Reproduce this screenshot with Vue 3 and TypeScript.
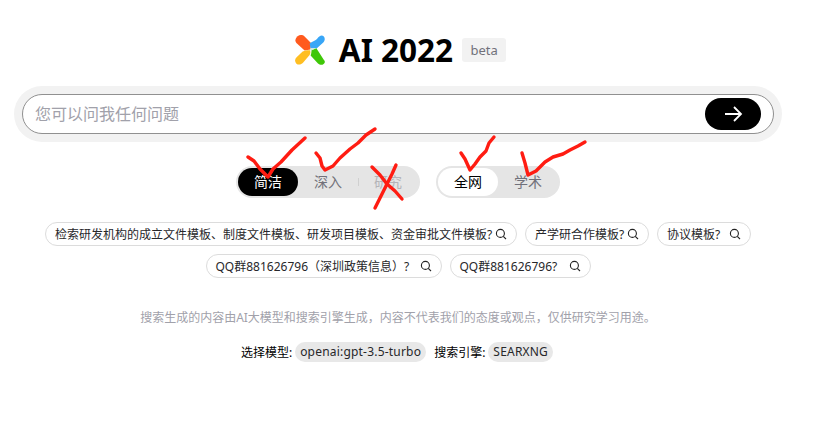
<script setup lang="ts">
import { ref } from 'vue'

const question = ref('')

const modes = [
  { label: '简洁', active: true },
  { label: '深入', active: false },
  { label: '研究', active: false, disabled: true },
]
const scopes = [
  { label: '全网', active: true },
  { label: '学术', active: false },
]
const rows = [
  [
    { text: '检索研发机构的成立文件模板、制度文件模板、研发项目模板、资金审批文件模板?', w: 472 },
    { text: '产学研合作模板?', w: 124 },
    { text: '协议模板?', w: 94 },
  ],
  [
    { text: 'QQ群881626796（深圳政策信息）?', w: 236 },
    { text: 'QQ群881626796?', w: 141 },
  ],
]
// 截图上手写的红色标记
const marks = [
  'M248 157 L254 161 L260 169 L268 177 L273 169 L281 162 L292 150 L305 138',
  'M316 153 L320 158 L322 166 L325 170 L333 166 L340 158 L350 149 L358 143 L366 135 L375 129',
  'M372 167 L380 175 L387 184 L395 191 L402 199',
  'M396 165 L392 174 L387 184 L381 196 L375 208',
  'M461 153 L465 159 L470 170 L475 164 L480 157 L486 151 L489 143 L494 137',
  'M522 153 L525 163 L528 175 L536 171 L545 162 L553 157 L563 154 L570 150 L578 146 L585 142',
]
</script>

<template>
  <div class="page">
    <div class="brand">
      <svg class="logo" viewBox="0 0 30 30" width="30" height="30">
        <path d="M2.6 1.2 C4.8 -0.6 7.8 -0.2 9.6 1.4 L16 8 L15.4 14.6 L9.6 15.6 L1.4 8 C-0.4 6 0.4 3 2.6 1.2 Z" fill="#ff5a1e" />
        <path d="M14.6 8.6 C17 6.4 20 6 22 4 C24 1 26.6 -0.4 28.6 1.2 C30.4 3 30 6 28 7.8 L21.6 13.6 C19.6 13 17.4 13.4 15.6 13.6 Z" fill="#38a6f7" />
        <path d="M1.6 22.2 L7.6 16.6 C10 15.4 12.6 15 15 15.2 C15.6 17 15.4 18.4 14.6 20 L8 27.8 C6 30 3 30.2 1.2 28.4 C-0.4 26.6 -0.2 24 1.6 22.2 Z" fill="#ffbe22" />
        <path d="M16.4 15 L21.4 13.2 L28.6 24.4 C30.4 26 30.2 28 28.6 29 C27 30.4 24.6 30 23 28.4 L15.6 20.4 C16.4 18.6 16.6 17 16.4 15 Z" fill="#3fc708" />
        <path d="M15.6 13.2 L21.2 13.2 L16.4 15.4 L15 15.2 Z" fill="#cfe8d8" />
      </svg>
      <h1 class="title">AI 2022</h1>
      <span class="beta">beta</span>
    </div>

    <div class="search-wrap">
      <div class="search">
        <input v-model="question" class="search-input" type="text" placeholder="您可以问我任何问题" />
        <button class="send" type="button" aria-label="发送">
          <svg viewBox="0 0 20 20" width="20" height="20" fill="none" stroke="#fff" stroke-width="1.8">
            <path d="M2 10 H18 M11 3 L18 10 L11 17" />
          </svg>
        </button>
      </div>
    </div>

    <div class="switches">
      <div class="switch">
        <template v-for="(m, i) in modes" :key="m.label">
          <span v-if="i === 2" class="sep"></span>
          <span class="opt" :class="{ dark: m.active, off: m.disabled }">{{ m.label }}</span>
        </template>
      </div>
      <div class="switch">
        <span v-for="s in scopes" :key="s.label" class="opt" :class="{ light: s.active }">{{ s.label }}</span>
      </div>
    </div>

    <div class="chips">
      <div v-for="(row, r) in rows" :key="r" class="chip-row">
        <div v-for="chip in row" :key="chip.text" class="chip" :style="{ width: chip.w + 'px' }">
          <span>{{ chip.text }}</span>
          <svg viewBox="0 0 12 12" width="12" height="12" fill="none" stroke="#222" stroke-width="1.1">
            <circle cx="5.4" cy="5.4" r="4" />
            <path d="M8.3 8.3 L11 11" />
          </svg>
        </div>
      </div>
    </div>

    <p class="notice">搜索生成的内容由AI大模型和搜索引擎生成，内容不代表我们的态度或观点，仅供研究学习用途。</p>

    <div class="meta">
      <span>选择模型:</span>
      <span class="tag">openai:gpt-3.5-turbo</span>
      <span class="meta-next">搜索引擎:</span>
      <span class="tag">SEARXNG</span>
    </div>

    <svg class="scribble" viewBox="0 0 814 427" width="814" height="427" fill="none" stroke="#ff1c12" stroke-width="3.4" stroke-linecap="round" stroke-linejoin="round">
      <path v-for="d in marks" :key="d" :d="d" />
    </svg>
  </div>
</template>

<style>
html,
body {
  margin: 0;
  background: #fff;
}
</style>

<style scoped>
.page {
  position: relative;
  width: 796px;
  height: 427px;
  overflow: hidden;
  display: flex;
  flex-direction: column;
  align-items: center;
  font-family: "Noto Sans", "Noto Sans CJK SC", sans-serif;
  color: #000;
}
.brand {
  display: flex;
  align-items: center;
  height: 30px;
  margin-top: 35px;
  margin-left: 5px;
}
.logo {
  display: block;
}
.title {
  margin: 0 0 0 14px;
  font-size: 31.5px;
  line-height: 30px;
  font-weight: 700;
}
.beta {
  margin-left: 9px;
  width: 44px;
  height: 24px;
  line-height: 24px;
  text-align: center;
  background: #f2f2f2;
  border-radius: 3px;
  font-size: 13px;
  color: #71717a;
}
.search-wrap {
  margin-top: 21px;
  box-sizing: border-box;
  width: 768px;
  height: 56px;
  padding: 8px;
  border-radius: 28px;
  background: #f2f2f2;
}
.search {
  box-sizing: border-box;
  height: 40px;
  display: flex;
  align-items: center;
  padding: 0 12px 0 12px;
  background: #fff;
  border: 1px solid #909090;
  border-radius: 20px;
}
.search-input {
  flex: 1;
  min-width: 0;
  border: 0;
  outline: 0;
  padding: 0;
  font-family: inherit;
  font-size: 16px;
  background: transparent;
}
.search-input::placeholder {
  color: #a1a1aa;
  opacity: 1;
}
.send {
  width: 56px;
  height: 32px;
  border: 0;
  padding: 0;
  border-radius: 16px;
  background: #000;
  display: flex;
  align-items: center;
  justify-content: center;
}
.switches {
  display: flex;
  gap: 16px;
  margin-top: 24px;
}
.switch {
  display: flex;
  align-items: center;
  height: 32px;
  box-sizing: border-box;
  padding: 2px;
  border-radius: 16px;
  background: #e5e5e5;
}
.opt {
  width: 60px;
  height: 28px;
  line-height: 28px;
  text-align: center;
  font-size: 14px;
  border-radius: 14px;
  color: #71717a;
}
.opt.dark {
  background: #000;
  color: #fff;
}
.opt.light {
  background: #fff;
  color: #000;
}
.opt.off {
  color: #b4b4b8;
}
.sep {
  width: 1px;
  height: 8px;
  background: #d0d0d0;
  margin-right: -1px;
}
.chips {
  margin-top: 24px;
  display: flex;
  flex-direction: column;
  gap: 8px;
}
.chip-row {
  display: flex;
  justify-content: center;
  gap: 8px;
}
.chip {
  box-sizing: border-box;
  height: 24px;
  display: flex;
  align-items: center;
  justify-content: space-between;
  padding: 0 9px;
  border: 1px solid #dcdcdc;
  border-radius: 12px;
  font-size: 12px;
  color: #27272a;
  white-space: nowrap;
}
.notice {
  margin: 32px 0 0;
  font-size: 12px;
  line-height: 16px;
  color: #a1a1aa;
}
.meta {
  margin-top: 16px;
  margin-right: 2px;
  display: flex;
  align-items: center;
  gap: 3px;
  font-size: 12px;
  height: 20px;
}
.meta-next {
  margin-left: 5px;
}
.tag {
  height: 20px;
  line-height: 20px;
  padding: 0 5px;
  border-radius: 10px;
  background: #e8e8e8;
  color: #27272a;
  letter-spacing: 0.2px;
}
.scribble {
  position: absolute;
  left: 0;
  top: 0;
  pointer-events: none;
}
</style>
